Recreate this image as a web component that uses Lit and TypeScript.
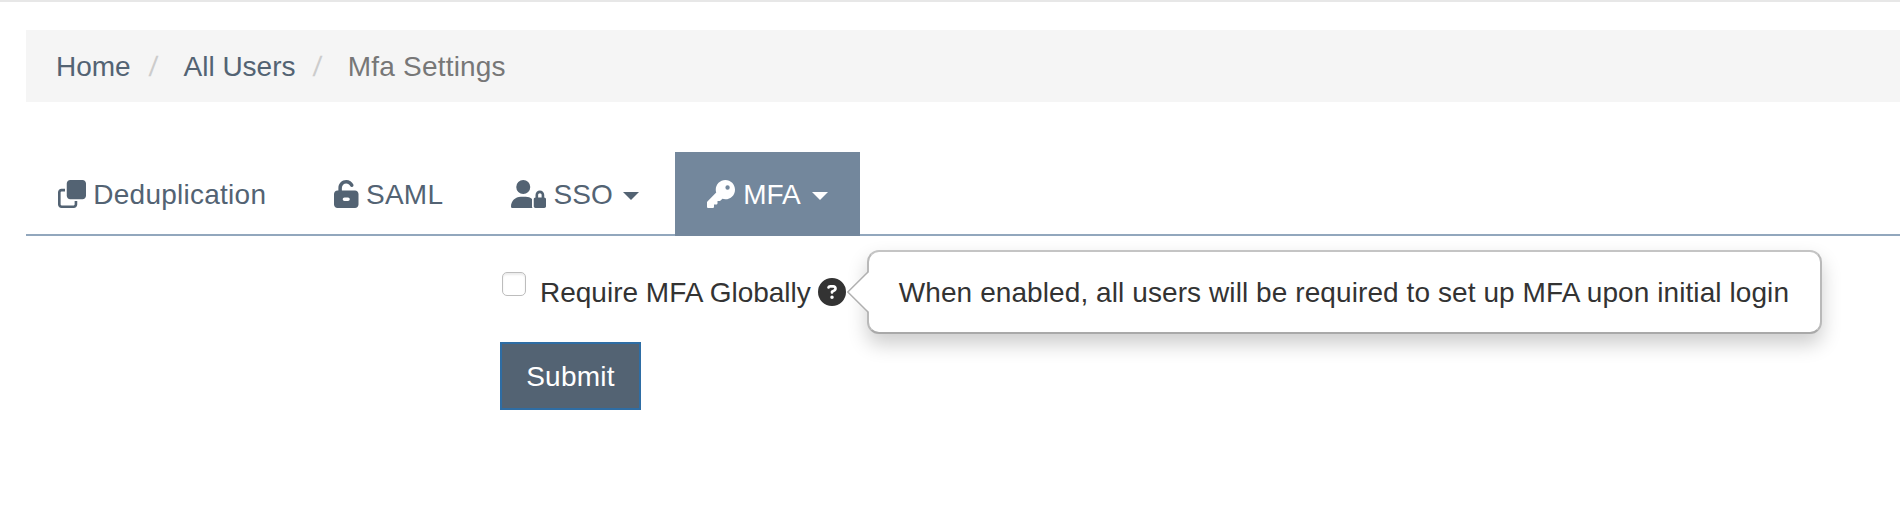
import { LitElement, html, css, svg, nothing } from "lit";
import { customElement, property } from "lit/decorators.js";
import { classMap } from "lit/directives/class-map.js";

const ICONS: Record<string, { w: number; d: string }> = {
  clone: {
    w: 512,
    d: "M0 224C0 188.7 28.7 160 64 160H128V208H64C55.2 208 48 215.2 48 224V448C48 456.8 55.2 464 64 464H288C296.8 464 304 456.8 304 448V384H352V448C352 483.3 323.3 512 288 512H64C28.7 512 0 483.3 0 448V224zM224 352H448c35.3 0 64-28.7 64-64V64c0-35.3-28.7-64-64-64H224c-35.3 0-64 28.7-64 64V288c0 35.3 28.7 64 64 64z",
  },
  unlock: {
    w: 448,
    d: "M224 64c-44.2 0-80 35.8-80 80v48H384c35.3 0 64 28.7 64 64V448c0 35.3-28.7 64-64 64H64c-35.3 0-64-28.7-64-64V256c0-35.3 28.7-64 64-64H80V144C80 64.5 144.5 0 224 0c57.5 0 107 33.7 130.1 82.3c7.6 16 .8 35.1-15.2 42.6s-35.1 .8-42.6-15.2C283.4 82.6 255.9 64 224 64zm32 320c17.7 0 32-14.3 32-32s-14.3-32-32-32H192c-17.7 0-32 14.3-32 32s14.3 32 32 32h64z",
  },
  userLock: {
    w: 640,
    d: "M224 256A128 128 0 1 0 224 0a128 128 0 1 0 0 256zm-45.7 48C79.8 304 0 383.8 0 482.3C0 498.7 13.3 512 29.7 512H392.6c-5.4-9.4-8.6-20.3-8.6-32V352c0-2.1 .1-4.2 .3-6.3c-31-26-71-41.7-114.6-41.7H178.3zM528 240c17.7 0 32 14.3 32 32v48H496V272c0-17.7 14.3-32 32-32zm-80 32v48c-17.7 0-32 14.3-32 32V480c0 17.7 14.3 32 32 32H608c17.7 0 32-14.3 32-32V352c0-17.7-14.3-32-32-32V272c0-44.2-35.8-80-80-80s-80 35.8-80 80z",
  },
  key: {
    w: 512,
    d: "M336 352c97.2 0 176-78.8 176-176S433.2 0 336 0S160 78.8 160 176c0 18.7 2.9 36.8 8.3 53.7L7 391c-4.5 4.5-7 10.6-7 17v80c0 13.3 10.7 24 24 24h80c13.3 0 24-10.7 24-24V448h40c13.3 0 24-10.7 24-24V384h40c6.4 0 12.5-2.5 17-7l33.3-33.3c16.9 5.4 35 8.3 53.7 8.3zM376 96a40 40 0 1 1 0 80 40 40 0 1 1 0-80z",
  },
  question: {
    w: 512,
    d: "M256 512A256 256 0 1 0 256 0a256 256 0 1 0 0 512zM169.8 165.3c7.9-22.3 29.1-37.3 52.8-37.3h58.3c34.9 0 63.1 28.3 63.1 63.1c0 22.6-12.1 43.5-31.7 54.8L280 264.4c-.2 13-10.9 23.6-24 23.6c-13.3 0-24-10.7-24-24V250.5c0-8.6 4.6-16.5 12.1-20.8l44.3-25.4c4.7-2.7 7.6-7.7 7.6-13.1c0-8.4-6.8-15.1-15.1-15.1H222.6c-3.4 0-6.4 2.1-7.5 5.3l-.4 1.2c-4.4 12.5-18.2 19-30.6 14.6s-19-18.2-14.6-30.6l.4-1.2zM224 352a32 32 0 1 1 64 0 32 32 0 1 1 -64 0z",
  },
};

@customElement("app-icon")
class AppIcon extends LitElement {
  @property() name = "";
  static styles = css`
    :host { display: inline-flex; height: 28px; }
    svg { display: block; height: 28px; fill: currentColor; overflow: visible; }
  `;
  render() {
    const icon = ICONS[this.name];
    if (!icon) return nothing;
    return html`<svg viewBox="0 0 ${icon.w} 512" width=${(icon.w / 512) * 28} height="28">
      ${svg`<path d=${icon.d}></path>`}
    </svg>`;
  }
}

const TABS = [
  { icon: "clone", label: "Deduplication", menu: false, active: false },
  { icon: "unlock", label: "SAML", menu: false, active: false },
  { icon: "userLock", label: "SSO", menu: true, active: false },
  { icon: "key", label: "MFA", menu: true, active: true },
];

@customElement("app-root")
class AppRoot extends LitElement {
  static styles = css`
    :host {
      display: block;
      box-sizing: border-box;
      height: 508px;
      overflow: hidden;
      background: #fff;
      border-top: 2px solid #e7e7e7;
      padding: 28px 0 0 26px;
      font: 28px/41px "Liberation Sans", Arial, Helvetica, sans-serif;
      color: #333;
    }
    * { box-sizing: border-box; }
    .breadcrumb {
      display: flex;
      height: 72px;
      padding: 16px 30px 15px;
      background: #f5f5f5;
      white-space: pre;
    }
    .crumb { color: #536373; }
    .current { color: #777; letter-spacing: 0.2px; }
    .slash { color: #ccc; padding: 0 26.5px 0 18.5px; transform: skewX(-6deg); }
    .slash.second { padding: 0 27px 0 17.5px; }
    .tabs {
      display: flex;
      gap: 4px;
      height: 84px;
      margin-top: 50px;
      border-bottom: 2px solid #92a7bd;
    }
    .tab {
      display: flex;
      height: 84px;
      padding: 22px 32px 21px;
      color: #536373;
      letter-spacing: 0.25px;
    }
    .tab app-icon { margin: 5.5px 7.3px 0 0; }
    .tab.menu { letter-spacing: 0; }
    .tab.active { background: #73879c; color: #fff; }
    .tab.active app-icon { margin-right: 8px; }
    .caret {
      align-self: flex-start;
      margin: 18px 0 0 10.5px;
      border: 8px solid transparent;
      border-top-color: currentColor;
      border-bottom: 0;
    }
    .tab.active .caret { margin-left: 11.5px; }
    .form {
      display: flex;
      flex-direction: column;
      align-items: flex-start;
      margin: 36px 0 0 474px;
    }
    .check { display: flex; padding-left: 2px; }
    .box {
      appearance: none;
      flex: none;
      width: 24px;
      height: 24px;
      margin: 0 14px 0 0;
      border: 1px solid #bdbdbd;
      border-radius: 5px;
      background: #fff;
      box-shadow: inset 0 2px 2px #ededed;
    }
    .help { position: relative; display: flex; height: 28px; margin: 5.5px 0 0 7.5px; }
    .popover {
      position: absolute;
      left: 48.5px;
      top: -27.5px;
      height: 84px;
      width: 955px;
      padding: 20px 30px;
      border: 2px solid #b9b9b9;
      border-top-color: #c4c4c4;
      border-bottom-color: #a9a9a9;
      border-radius: 12px;
      background: #fff;
      box-shadow: 0 10px 20px rgba(0, 0, 0, 0.2);
      white-space: nowrap;
      letter-spacing: 0.085px;
    }
    .arrow { position: absolute; left: -22px; top: 18px; width: 23px; height: 44px; }
    .submit {
      width: 141px;
      height: 68px;
      margin-top: 29px;
      padding: 12px 0 11px;
      border: 2px solid #2e6da4;
      border-radius: 0;
      background: #536373;
      color: #fff;
      font: inherit;
      letter-spacing: 0.25px;
      text-align: center;
    }
  `;

  render() {
    return html`
      <nav class="breadcrumb">
        <a class="crumb">Home</a><span class="slash">/</span><a class="crumb">All Users</a><span class="slash second">/</span><span class="current">Mfa Settings</span>
      </nav>
      <nav class="tabs">
        ${TABS.map(
          (t) => html`<a class=${classMap({ tab: true, menu: t.menu, active: t.active })}
            ><app-icon name=${t.icon}></app-icon><span>${t.label}</span>${t.menu ? html`<span class="caret"></span>` : nothing}</a
          >`
        )}
      </nav>
      <div class="form">
        <div class="check">
          <input class="box" type="checkbox" aria-label="Require MFA Globally" />
          <span>Require MFA Globally</span>
          <span class="help">
            <app-icon name="question"></app-icon>
            <div class="popover">
              <svg class="arrow" viewBox="0 0 23 44">
                <path d="M23 0.5L0.8 22L23 43.5z" fill="#fff"></path>
                <path d="M21.5 1.5L0.8 22L21.5 42.5" fill="none" stroke="#b0b0b0" stroke-width="1.5"></path>
              </svg>
              When enabled, all users will be required to set up MFA upon initial login
            </div>
          </span>
        </div>
        <button class="submit">Submit</button>
      </div>
    `;
  }
}
